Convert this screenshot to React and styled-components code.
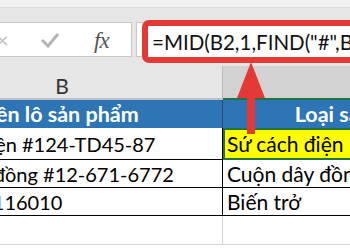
import React from 'react';
import styled, { createGlobalStyle } from 'styled-components';

const GlobalStyle = createGlobalStyle`
  html, body {
    margin: 0;
    padding: 0;
    background: #ffffff;
    overflow: hidden;
  }
  body {
    font-family: Lato, "Liberation Sans", sans-serif;
  }
`;

const Screen = styled.div`
  position: relative;
  width: 350px;
  height: 250px;
  overflow: hidden;
  background: #ffffff;
`;

const TopStrip = styled.div`
  height: 7px;
  background: #f1f1f1;
`;

const FormulaBar = styled.div`
  height: 59px;
  background: #e6e6e6;
  border-top: 1px solid #dadada;
  box-sizing: border-box;
  display: flex;
  align-items: flex-start;
  padding-top: 14px;
  gap: 4px;
`;

const ButtonBox = styled.div`
  width: 133px;
  height: 35px;
  margin-left: -1px;
  background: #ffffff;
  border: 1px solid #c8c8c8;
  box-sizing: border-box;
  display: flex;
  align-items: center;
  position: relative;
`;

const BarIcon = styled.span`
  position: absolute;
  left: ${(p) => p.$x}px;
  top: 50%;
  transform: translateY(-50%);
  color: ${(p) => p.$color};
  font-size: ${(p) => p.$size}px;
  line-height: 1;
`;

const Fx = styled.span`
  position: absolute;
  left: 94px;
  top: 5px;
  font-family: "Liberation Serif", serif;
  font-style: italic;
  font-size: 23px;
  color: #555555;
  letter-spacing: -1px;
`;

const InputBox = styled.div`
  flex: 1;
  height: 35px;
  background: #ffffff;
  border: 1px solid #c8c8c8;
  border-right: none;
  box-sizing: border-box;
`;

const Highlight = styled.div`
  position: absolute;
  left: 142px;
  top: 20px;
  width: 260px;
  height: 43px;
  border: 6px solid #e53935;
  border-radius: 7px;
  box-sizing: border-box;
  background: #ffffff;
  display: flex;
  align-items: center;
  padding-left: 4px;
  font-size: 20.5px;
  color: #111111;
  white-space: nowrap;
  overflow: hidden;
`;

const Grid = styled.div`
  display: grid;
  grid-template-columns: 321px 280px;
  margin-left: -98px;
`;

const ColHead = styled.div`
  height: 34px;
  box-sizing: border-box;
  background: ${(p) => (p.$active ? '#d3d3d3' : '#e6e6e6')};
  border-right: 1px solid #bcbcbc;
  border-bottom: 2px solid ${(p) => (p.$active ? '#217346' : '#c0c0c0')};
  display: flex;
  align-items: center;
  justify-content: center;
  padding-top: 7px;
  font-size: 21px;
  color: #333333;
`;

const HeadCell = styled.div`
  height: 28px;
  background: #2e75b6;
  color: #ffffff;
  font-weight: 700;
  font-size: 21.5px;
  display: flex;
  align-items: center;
  justify-content: center;
  white-space: nowrap;
  overflow: hidden;
  box-sizing: border-box;
  border-right: 1px solid #1f4e79;
`;

const Cell = styled.div`
  height: ${(p) => p.$h}px;
  box-sizing: border-box;
  background: ${(p) => (p.$yellow ? '#ffff00' : '#ffffff')};
  border-bottom: 1px solid #000000;
  border-right: 1px solid #000000;
  ${(p) => p.$selected && 'outline: 2px solid #217346; outline-offset: -2px;'}
  display: flex;
  align-items: center;
  padding-left: 4px;
  font-size: ${(p) => (p.$wide ? 21 : 20)}px;
  color: #000000;
  white-space: nowrap;
  overflow: hidden;
`;

const EmptyCell = styled.div`
  height: 29px;
  box-sizing: border-box;
  border-right: 1px solid #d4d4d4;
  border-bottom: 1px solid #d4d4d4;
`;

const Arrow = styled.svg`
  position: absolute;
  left: 236px;
  top: 62px;
`;

const rows = [
  { b: 'Sứ cách điện #124-TD45-87', c: 'Sứ cách điện', h: 32, yellow: true },
  { b: 'Cuộn dây đồng #12-671-6772', c: 'Cuộn dây đồng', h: 28 },
  { b: 'Biến trở #116010', c: 'Biến trở', h: 28 },
];

export default function App() {
  return (
    <Screen>
      <GlobalStyle />
      <TopStrip />
      <FormulaBar>
        <ButtonBox>
          <BarIcon $x={-4} $color="#c4c4c4" $size={22}>×</BarIcon>
          <BarIcon $x={40} $color="#b5b5b5" $size={20}>
            <svg width="20" height="16" viewBox="0 0 20 16">
              <path d="M2 8 L8 14 L18 2" fill="none" stroke="#b5b5b5" strokeWidth="3" />
            </svg>
          </BarIcon>
          <Fx>fx</Fx>
        </ButtonBox>
        <InputBox />
      </FormulaBar>
      <Highlight>=MID(B2,1,FIND("#",B2)-1)</Highlight>
      <Grid>
        <ColHead>B</ColHead>
        <ColHead $active>C</ColHead>
        <HeadCell>Tên lô sản phẩm</HeadCell>
        <HeadCell>Loại sản phẩm</HeadCell>
        {rows.map((r) => (
          <React.Fragment key={r.b}>
            <Cell $h={r.h}>{r.b}</Cell>
            <Cell $h={r.h} $wide $yellow={r.yellow} $selected={r.yellow}>{r.c}</Cell>
          </React.Fragment>
        ))}
        <EmptyCell />
        <EmptyCell />
      </Grid>
      <Arrow width="32" height="72" viewBox="0 0 32 72">
        <polygon points="15,0 29,36 19,36 19,72 11,72 11,36 1,36" fill="#e53935" />
      </Arrow>
    </Screen>
  );
}
